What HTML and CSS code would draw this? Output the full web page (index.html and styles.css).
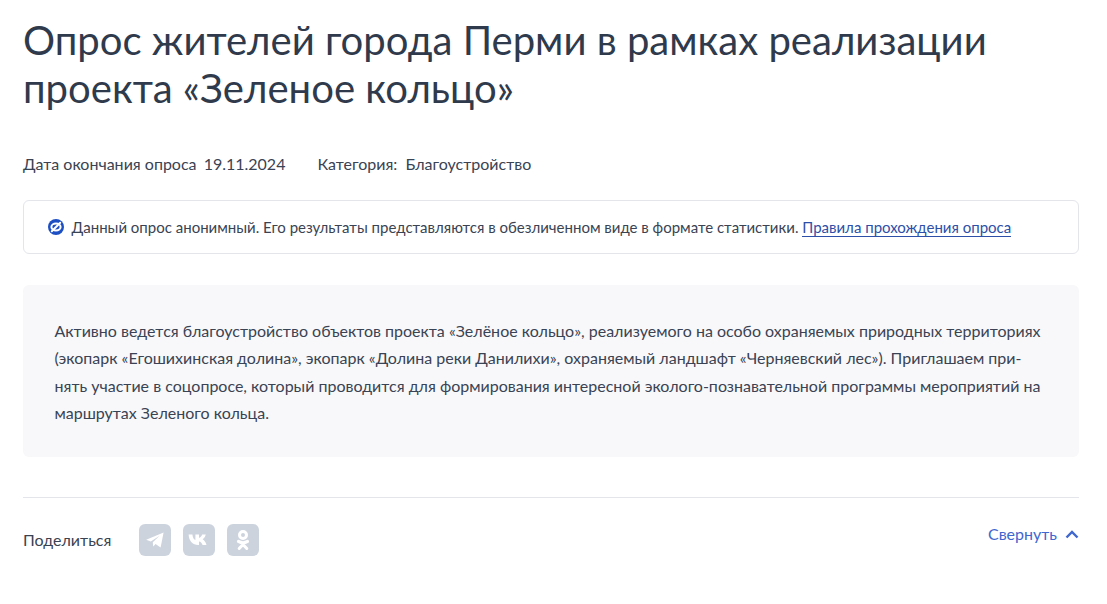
FILE: index.html
```html
<!DOCTYPE html>
<html lang="ru">

<head>
    <meta charset="UTF-8">
    <meta name="viewport" content="width=device-width, initial-scale=1.0">
    <title>Опрос жителей города Перми</title>
    <link rel="stylesheet" href="styles.css">
</head>

<body>
    <div class="container">
        <h1>Опрос жителей города Перми в рамках реализации проекта «Зеленое кольцо»</h1>

        <div class="meta">
            <div>Дата окончания опроса <span class="meta-date">19.11.2024</span></div>
            <div>Категория: <span class="meta-value">Благоустройство</span></div>
        </div>

        <div class="notice">
            <svg class="notice-icon" width="16" height="16" viewBox="0 0 16 16">
                <circle cx="8" cy="8" r="8" fill="#1d4fc4" />
                <ellipse cx="8" cy="8" rx="4.6" ry="3.4" fill="none" stroke="#fff" stroke-width="2" />
                <path d="M3.800 12.200 12.200 3.800" stroke="#fff" stroke-width="2" stroke-linecap="round" />
            </svg>
            <span>Данный опрос анонимный. Его результаты представляются в обезличенном виде в формате статистики. <a class="notice-link" href="#">Правила прохождения опроса</a></span>
        </div>

        <div class="description">
            Активно ведется благоустройство объектов проекта «Зелёное кольцо», реализуемого на особо охраняемых природных территориях<br>
            (экопарк «Егошихинская долина», экопарк «Долина реки Данилихи», охраняемый ландшафт «Черняевский лес»). Приглашаем при-<br>
            нять участие в соцопросе, который проводится для формирования интересной эколого-познавательной программы мероприятий на<br>
            маршрутах Зеленого кольца.
        </div>

        <div class="footer">
            <div class="share">
                <span class="share-label">Поделиться</span>
                <div class="share-icons">
                    <a class="share-btn" href="#">
                        <svg width="20" height="20" viewBox="0 0 20 20">
                            <path d="M1.200 9.800 18.600 2.400 15.600 17.400 10.600 14 8.200 16.400 7.800 12.200 14.600 5.800 5.800 11.400Z" fill="#fff" />
                        </svg>
                    </a>
                    <a class="share-btn" href="#">
                        <svg width="22" height="14" viewBox="0 0 22 14">
                            <path d="M.6 1.500h3.800c.3 3.400 1.700 5.200 3 5.600V1.500h3.600v3.400c1.300-.2 2.600-1.700 3.200-3.400h3.600c-.5 2.300-2 4-3.200 4.800 1.200.7 3.100 2.400 3.900 5.700h-3.900c-.7-2-2-3.300-3.600-3.500V12h-.9C5 12 .9 8.200.6 1.500Z" fill="#fff" />
                        </svg>
                    </a>
                    <a class="share-btn" href="#">
                        <svg width="16" height="22" viewBox="0 0 16 22">
                            <circle cx="8" cy="6" r="3.500" fill="none" stroke="#fff" stroke-width="3" />
                            <path d="M3.400 12.400c3 1.800 6.200 1.800 9.200 0M8 14v1.500M8 15.500l-3.800 4M8 15.500l3.800 4" fill="none" stroke="#fff" stroke-width="3" stroke-linecap="round" />
                        </svg>
                    </a>
                </div>
            </div>
            <a class="collapse" href="#">
                Свернуть
                <svg class="collapse-icon" width="14" height="9" viewBox="0 0 14 9">
                    <path d="M1.500 7.500 7 2l5.500 5.500" fill="none" stroke="#3f67cf" stroke-width="2.400" />
                </svg>
            </a>
        </div>
    </div>
</body>

</html>
```

FILE: styles.css
```css
body {
    font-family: Lato, "Noto Sans", sans-serif;
    margin: 0;
    background: #fff;
    color: #3a4353;
}

.container {
    width: 1056px;
    padding: 16px 0 48px 23px;
}

h1 {
    font-size: 40.100px;
    line-height: 48px;
    font-weight: 400;
    margin: 0;
    color: #2f3a4c;
}

.meta {
    display: flex;
    gap: 32px;
    margin-top: 42px;
    font-size: 16px;
    line-height: 20px;
}

.meta-date {
    margin-left: 3px;
}

.meta-value {
    margin-left: 4px;
}

.notice {
    display: flex;
    align-items: center;
    gap: 7.500px;
    height: 54px;
    box-sizing: border-box;
    margin-top: 26px;
    padding-left: 24px;
    border: 1px solid #e3e5ea;
    border-radius: 6px;
    font-size: 15px;
}

.notice-icon {
    flex: none;
}

.notice-link {
    color: #2d4fa8;
    text-decoration: none;
    border-bottom: 1px solid #2d4fa8;
}

.description {
    margin-top: 31px;
    padding: 32px 31.500px;
    height: 172px;
    box-sizing: border-box;
    background: #f8f8fa;
    border-radius: 6px;
    font-size: 16px;
    line-height: 27.300px;
}

.footer {
    display: flex;
    justify-content: space-between;
    margin-top: 40px;
    padding-top: 26px;
    border-top: 1px solid #e3e5ea;
}

.share {
    display: flex;
    align-items: center;
}

.share-label {
    font-size: 16px;
    margin-top: -2px;
}

.share-icons {
    display: flex;
    gap: 12px;
    margin-left: 28px;
}

.share-btn {
    display: flex;
    align-items: center;
    justify-content: center;
    width: 32px;
    height: 32px;
    border-radius: 6px;
    background: #cdd3dd;
}

.collapse {
    display: flex;
    align-items: center;
    gap: 8px;
    height: 18px;
    font-size: 16px;
    color: #3f67cf;
    text-decoration: none;
}

.collapse-icon {
    margin-top: 3px;
}
```
